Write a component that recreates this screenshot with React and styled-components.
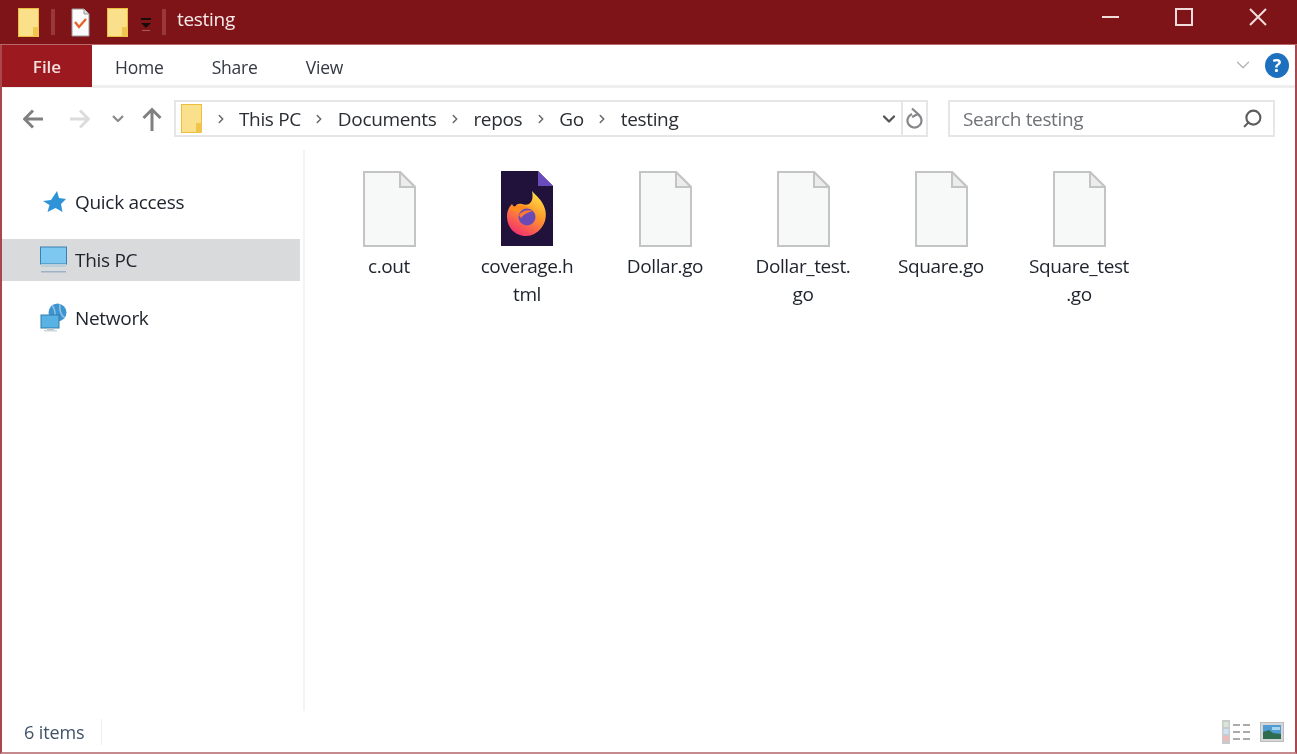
import React from 'react';
import styled, { createGlobalStyle } from 'styled-components';
import { ChevronDown, ChevronRight, Search } from 'lucide-react';

const GlobalStyle = createGlobalStyle`
  html, body {
    margin: 0;
    padding: 0;
    overflow: hidden;
  }
  body {
    background: linear-gradient(#7f1418 45px, #fff 45px);
  }
  * {
    box-sizing: border-box;
  }
`;

const Win = styled.div`
  width: 1297px;
  height: 754px;
  display: flex;
  flex-direction: column;
  background: #fff;
  border-left: 2px solid #a8474c;
  border-right: 2px solid #a8474c;
  border-bottom: 2px solid #c58a8d;
  font-family: 'Open Sans', 'Noto Sans', sans-serif;
  color: #1d222c;
  filter: blur(0.7px);
`;

const TitleBar = styled.div`
  height: 45px;
  margin: 0 -2px;
  padding-left: 18px;
  background: #7f1418;
  border-bottom: 1px solid #b9686b;
  display: flex;
  align-items: center;
  flex-shrink: 0;
`;

const QuickSep = styled.span`
  width: 4px;
  height: 26px;
  background: #98383b;
  margin: ${(p) => p.$margin};
`;

const QuickGap = styled.span`
  width: 17px;
`;

const QuickCaret = styled.svg`
  margin-left: 11px;
  margin-top: 6px;
`;

const TitleText = styled.span`
  color: #f7eaea;
  font-size: 19px;
  letter-spacing: -0.3px;
  margin-left: 11px;
  margin-top: -6px;
`;

const WinControls = styled.div`
  margin-left: auto;
  display: flex;
  align-items: center;
  align-self: flex-start;
  padding-top: 8px;
  margin-right: 30px;
  gap: 56px;
`;

const RibbonTabs = styled.div`
  height: 43px;
  display: flex;
  align-items: center;
  flex-shrink: 0;
  border-bottom: 3px solid #eeeeee;
  font-size: 17.5px;
`;

const FileTab = styled.div`
  width: 90px;
  height: 42px;
  margin-bottom: -2px;
  background: #9c1a1f;
  color: #f4dfdf;
  font-size: 17px;
  font-weight: 600;
  display: flex;
  align-items: center;
  justify-content: center;
`;

const Tab = styled.div`
  color: #333842;
  letter-spacing: -0.2px;
  padding-top: 3px;
  margin-left: ${(p) => p.$left}px;
`;

const HelpArea = styled.div`
  margin-left: auto;
  margin-right: 6px;
  display: flex;
  align-items: center;
  gap: 11px;
`;

const HelpDot = styled.div`
  width: 24px;
  height: 25px;
  border-radius: 50%;
  background: #1c70bd;
  color: #fff;
  font-size: 18px;
  font-weight: 700;
  display: flex;
  align-items: center;
  justify-content: center;
`;

const NavRow = styled.div`
  height: 62px;
  padding: 12px 20px 0 21px;
  display: flex;
  align-items: flex-start;
  flex-shrink: 0;
`;

const NavButton = styled.div`
  width: ${(p) => p.$w}px;
  height: 37px;
  margin-left: ${(p) => p.$left || 0}px;
  display: flex;
  align-items: center;
  justify-content: center;
`;

const AddressBox = styled.div`
  width: 754px;
  height: 37px;
  margin-left: 11px;
  border: 2px solid #e6e6e6;
  display: flex;
  align-items: center;
  padding-left: 5px;
`;

const Crumb = styled.span`
  font-size: 19px;
  letter-spacing: -0.35px;
  color: #2a2d33;
`;

const CrumbArrow = styled.span`
  display: flex;
  color: #666666;
  margin: 0 11.5px;
`;

const AddressEnd = styled.div`
  margin-left: auto;
  display: flex;
  align-items: center;
  height: 100%;
`;

const RefreshCell = styled.div`
  width: 25px;
  height: 100%;
  border-left: 2px solid #e6e6e6;
  margin-left: 2px;
  display: flex;
  align-items: center;
  justify-content: center;
`;

const SearchBox = styled.div`
  width: 327px;
  height: 37px;
  margin-left: 20px;
  border: 2px solid #e6e6e6;
  padding: 0 10px 0 13px;
  display: flex;
  align-items: center;
  justify-content: space-between;
  font-size: 19px;
  letter-spacing: -0.35px;
  color: #6f7277;
`;

const SearchGlyph = styled(Search)`
  transform: scaleX(-1);
`;

const Body = styled.div`
  flex: 1;
  display: flex;
  min-height: 0;
`;

const Sidebar = styled.div`
  width: 303px;
  padding: 31px 3px 0 0;
  border-right: 2px solid #f3f3f3;
  display: flex;
  flex-direction: column;
  gap: 16px;
  flex-shrink: 0;
`;

const SideRow = styled.div`
  height: 42px;
  padding-left: 38px;
  display: flex;
  align-items: center;
  gap: 8px;
  font-size: 19px;
  letter-spacing: -0.3px;
  background: ${(p) => (p.$active ? '#d9dadb' : 'transparent')};
`;

const SideIcon = styled.span`
  width: 27px;
  height: 30px;
  display: flex;
  align-items: center;
  justify-content: center;
`;

const Files = styled.div`
  flex: 1;
  padding: 21px 0 0 15px;
  display: flex;
  align-items: flex-start;
`;

const FileItem = styled.div`
  width: 138px;
  display: flex;
  flex-direction: column;
  align-items: center;
`;

const FileName = styled.div`
  margin-top: 4px;
  font-size: 19px;
  line-height: 28px;
  letter-spacing: -0.4px;
  text-align: center;
  white-space: nowrap;
`;

const StatusBar = styled.div`
  height: 41px;
  padding: 0 11px 0 22px;
  display: flex;
  align-items: center;
  flex-shrink: 0;
  font-size: 18px;
  letter-spacing: -0.1px;
  color: #3f5268;
`;

const StatusSep = styled.span`
  width: 1px;
  height: 26px;
  margin-left: 16px;
  background: #eeeeee;
`;

const ViewIcons = styled.div`
  margin-left: auto;
  display: flex;
  align-items: center;
  gap: 10px;
`;

const FolderIcon = ({ w = 21, h = 29 }) => (
  <svg width={w} height={h} viewBox="0 0 21 29">
    <rect x="0.5" y="0.5" width="20" height="28" fill="#fae08a" stroke="#edbd3c" />
    <rect x="15" y="19" width="6" height="10" fill="#efc44f" />
  </svg>
);

const NoteIcon = () => (
  <svg width="19" height="29" viewBox="0 0 19 29">
    <path d="M1 1h12l5 5v22H1z" fill="#fbfbfb" stroke="#9a9a9a" />
    <path d="M13 1v5h5" fill="#ddd" stroke="#9a9a9a" />
    <path d="M4 14l4 5 7-8" fill="none" stroke="#e8622c" strokeWidth="2.4" />
  </svg>
);

const BackArrow = ({ color }) => (
  <svg width="20" height="20" viewBox="0 0 20 20">
    <path d="M20 10H2M10 1.500L1.500 10l8.500 8.500" fill="none" stroke={color} strokeWidth="3" />
  </svg>
);

const ForwardArrow = ({ color }) => (
  <svg width="20" height="20" viewBox="0 0 20 20">
    <path d="M0 10h18M10 1.500l8.500 8.500-8.500 8.500" fill="none" stroke={color} strokeWidth="3" />
  </svg>
);

const UpArrow = ({ color }) => (
  <svg width="20" height="24" viewBox="0 0 20 24">
    <path d="M10 24V3M1.500 11L10 2.500l8.500 8.500" fill="none" stroke={color} strokeWidth="3" />
  </svg>
);

const SmallChevron = () => (
  <svg width="12" height="7" viewBox="0 0 12 7">
    <path d="M1 1l5 5 5-5" fill="none" stroke="#8a8a8a" strokeWidth="2.2" />
  </svg>
);

const RefreshIcon = () => (
  <svg width="18" height="24" viewBox="0 0 18 24">
    <path d="M12 7.500a7 7 0 1 1-6-.5" fill="none" stroke="#85878a" strokeWidth="2.2" />
    <path d="M6 1.500l6 5.500-6 3" fill="none" stroke="#85878a" strokeWidth="2.2" />
  </svg>
);

const Doc = () => (
  <svg width="54" height="77" viewBox="0 0 54 77">
    <path d="M2 1h36l15 15v59H2z" fill="#f7f8f8" stroke="#c4c4c4" strokeWidth="2" />
    <path d="M38 1v15h15z" fill="#ececec" stroke="#c4c4c4" strokeWidth="2" />
  </svg>
);

const FirefoxDoc = () => (
  <svg width="54" height="77" viewBox="0 0 54 77">
    <defs>
      <linearGradient id="ff" x1="0.8" y1="0" x2="0.3" y2="1">
        <stop offset="0" stopColor="#ffe64a" />
        <stop offset="0.45" stopColor="#ff9a2a" />
        <stop offset="1" stopColor="#f52f6e" />
      </linearGradient>
    </defs>
    <path d="M1 0h37l15 15v60H1z" fill="#20123a" />
    <path d="M38 0v15h15z" fill="#6a4bbd" />
    <path
      d="M32 20C36 25 42 28 45 38C49 52 38 65 26 65C14 65 7 55 7 46C7 40 9 36 12 33C13 35 14 36 15 36C16 33 19 32 22 33C24 34 27 34 29 33C33 30 33 25 32 20Z"
      fill="url(#ff)"
    />
    <path d="M9 38C14 34 22 33 30 37C26 37 24 39 21 40C17 41 13 40 9 38Z" fill="#ff8a1f" />
    <circle cx="27" cy="46" r="8.500" fill="#6a4bb5" />
    <path d="M19 44C22 40 28 38 33 40C28 41 24 43 21 47Z" fill="#ff7a30" />
  </svg>
);

const StarIcon = () => (
  <svg width="24" height="25" viewBox="0 0 24 25">
    <path d="M15 1l2 7 7 1-5 5 1.500 8-7-4-8 4 2-7L1 11l8-1z" fill="#2f93d8" />
  </svg>
);

const PcIcon = () => (
  <svg width="27" height="28" viewBox="0 0 27 28">
    <rect x="0.5" y="1" width="26" height="17" fill="#7cc8f0" stroke="#3f7fae" />
    <rect x="1" y="18" width="25" height="3" fill="#bcd0dc" />
    <rect x="9" y="21" width="9" height="3" fill="#d6dde2" />
    <rect x="1" y="25" width="25" height="1.500" fill="#9db2c9" />
  </svg>
);

const NetIcon = () => (
  <svg width="27" height="30" viewBox="0 0 27 30">
    <circle cx="17.500" cy="9.500" r="9" fill="#3f93cf" />
    <path d="M12 2c3 4 4 10 2 16M20 1c-1 6 1 12 5 14" fill="none" stroke="#8cc4e8" strokeWidth="1.500" />
    <rect x="1" y="12" width="18" height="13" fill="#58b2e4" stroke="#2f7cad" />
    <rect x="7" y="25" width="7" height="2" fill="#b9c3ca" />
    <rect x="4" y="27" width="13" height="1.500" fill="#cfd6db" />
  </svg>
);

const ViewDetails = () => (
  <svg width="28" height="24" viewBox="0 0 28 24">
    <rect x="0" y="0" width="8" height="24" fill="#c9cacb" />
    <rect x="1.500" y="2" width="5" height="5" fill="#d7e6d6" />
    <rect x="1.500" y="9" width="5" height="5" fill="#cfe2f6" />
    <rect x="1.500" y="16" width="5" height="5" fill="#f3b9b9" />
    {[4, 11, 18].map((y) => (
      <g key={y} fill="#a9aaab">
        <rect x="11" y={y} width="7" height="2" />
        <rect x="21" y={y} width="7" height="2" />
      </g>
    ))}
  </svg>
);

const ViewLarge = () => (
  <svg width="24" height="20" viewBox="0 0 24 20">
    <rect x="0.500" y="0.500" width="23" height="19" fill="#d5d6d7" stroke="#bdbdbd" />
    <rect x="3" y="3" width="18" height="14" fill="#4f9bd3" />
    <path d="M3 10l6-2 4 3 8 1v5H3z" fill="#2f6b4f" />
    <rect x="12" y="5" width="8" height="3" fill="#a8d3ee" />
  </svg>
);

const crumbs = ['This PC', 'Documents', 'repos', 'Go', 'testing'];

// names broken where the explorer wraps them
const files = [
  { lines: ['c.out'] },
  { lines: ['coverage.h', 'tml'], firefox: true },
  { lines: ['Dollar.go'] },
  { lines: ['Dollar_test.', 'go'] },
  { lines: ['Square.go'] },
  { lines: ['Square_test', '.go'] },
];

const App = () => (
  <>
    <GlobalStyle />
    <Win>
      <TitleBar>
        <FolderIcon />
        <QuickSep $margin="0 16px 0 12px" />
        <NoteIcon />
        <QuickGap />
        <FolderIcon />
        <QuickCaret width="14" height="16" viewBox="0 0 14 16">
          <rect x="2" y="1" width="10" height="2" fill="#1a0b0b" />
          <path d="M2 6h10l-5 5z" fill="#1a0b0b" />
          <rect x="3" y="13" width="8" height="1" fill="#a85c5c" />
        </QuickCaret>
        <QuickSep $margin="0 0 0 9px" />
        <TitleText>testing</TitleText>
        <WinControls>
          <svg width="17" height="18" viewBox="0 0 17 18">
            <rect x="0" y="8" width="17" height="2" fill="#f1dcdc" />
          </svg>
          <svg width="18" height="18" viewBox="0 0 18 18">
            <rect x="1" y="1" width="16" height="16" fill="none" stroke="#f1dcdc" strokeWidth="2" />
          </svg>
          <svg width="18" height="18" viewBox="0 0 18 18">
            <path d="M1 1l16 16M17 1L1 17" stroke="#f1dcdc" strokeWidth="2" />
          </svg>
        </WinControls>
      </TitleBar>

      <RibbonTabs>
        <FileTab>File</FileTab>
        <Tab $left={23}>Home</Tab>
        <Tab $left={48}>Share</Tab>
        <Tab $left={48}>View</Tab>
        <HelpArea>
          <ChevronDown size={22} color="#b5b5b5" strokeWidth={1.5} />
          <HelpDot>?</HelpDot>
        </HelpArea>
      </RibbonTabs>

      <NavRow>
        <NavButton $w={20}>
          <BackArrow color="#808080" />
        </NavButton>
        <NavButton $w={20} $left={27}>
          <ForwardArrow color="#dcdcdc" />
        </NavButton>
        <NavButton $w={14} $left={21}>
          <SmallChevron />
        </NavButton>
        <NavButton $w={22} $left={16}>
          <UpArrow color="#808080" />
        </NavButton>
        <AddressBox>
          <FolderIcon />
          <CrumbArrow>
            <ChevronRight size={14} strokeWidth={2.5} />
          </CrumbArrow>
          {crumbs.map((c, i) => (
            <React.Fragment key={c}>
              {i > 0 && (
                <CrumbArrow>
                  <ChevronRight size={14} strokeWidth={2.5} />
                </CrumbArrow>
              )}
              <Crumb>{c}</Crumb>
            </React.Fragment>
          ))}
          <AddressEnd>
            <ChevronDown size={20} color="#555" strokeWidth={2.8} />
            <RefreshCell>
              <RefreshIcon />
            </RefreshCell>
          </AddressEnd>
        </AddressBox>
        <SearchBox>
          <span>Search testing</span>
          <SearchGlyph size={21} color="#5c5c5c" strokeWidth={2.4} />
        </SearchBox>
      </NavRow>

      <Body>
        <Sidebar>
          <SideRow>
            <SideIcon>
              <StarIcon />
            </SideIcon>
            Quick access
          </SideRow>
          <SideRow $active>
            <SideIcon>
              <PcIcon />
            </SideIcon>
            This PC
          </SideRow>
          <SideRow>
            <SideIcon>
              <NetIcon />
            </SideIcon>
            Network
          </SideRow>
        </Sidebar>
        <Files>
          {files.map((f) => (
            <FileItem key={f.lines.join('')}>
              {f.firefox ? <FirefoxDoc /> : <Doc />}
              <FileName>
                {f.lines.map((line) => (
                  <div key={line}>{line}</div>
                ))}
              </FileName>
            </FileItem>
          ))}
        </Files>
      </Body>

      <StatusBar>
        6 items
        <StatusSep />
        <ViewIcons>
          <ViewDetails />
          <ViewLarge />
        </ViewIcons>
      </StatusBar>
    </Win>
  </>
);

export default App;
